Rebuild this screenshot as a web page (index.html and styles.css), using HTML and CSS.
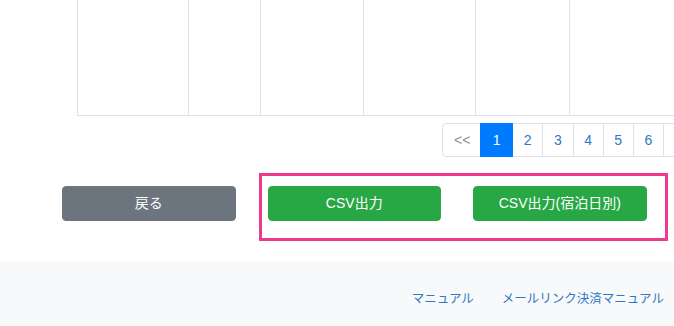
FILE: index.html
```html
<!DOCTYPE html>
<html lang="ja">
<head>
    <meta charset="UTF-8">
    <meta name="viewport" content="width=device-width, initial-scale=1.0">
    <title>予約一覧</title>
    <link rel="stylesheet" href="styles.css">
</head>
<body>
    <div class="main">
        <div class="table-wrap">
            <table class="data-table">
                <colgroup>
                    <col style="width: 111px">
                    <col style="width: 72px">
                    <col style="width: 103px">
                    <col style="width: 112px">
                    <col style="width: 94px">
                    <col style="width: 105px">
                </colgroup>
                <tbody>
                    <tr>
                        <td></td><td></td><td></td><td></td><td></td><td></td>
                    </tr>
                </tbody>
            </table>
        </div>

        <ul class="pagination">
            <li class="page-item disabled"><a class="page-link" href="#">&lt;&lt;</a></li>
            <li class="page-item active"><a class="page-link" href="#">1</a></li>
            <li class="page-item"><a class="page-link" href="#">2</a></li>
            <li class="page-item"><a class="page-link" href="#">3</a></li>
            <li class="page-item"><a class="page-link" href="#">4</a></li>
            <li class="page-item"><a class="page-link" href="#">5</a></li>
            <li class="page-item"><a class="page-link" href="#">6</a></li>
            <li class="page-item page-edge"><span class="page-link"></span></li>
        </ul>

        <div class="actions">
            <div class="col"><button class="btn btn-secondary">戻る</button></div>
            <div class="col"><button class="btn btn-success">CSV出力</button></div>
            <div class="col"><button class="btn btn-success">CSV出力(宿泊日別)</button></div>
            <div class="highlight"></div>
        </div>
    </div>

    <footer class="footer">
        <a href="#">マニュアル</a>
        <a href="#">メールリンク決済マニュアル</a>
    </footer>
</body>
</html>
```

FILE: styles.css
```css
:root {
    --border-color: #dee2e6;
    --link-color: #2f78c4;
    --primary-color: #007bff;
    --success-color: #28a745;
    --secondary-color: #6c757d;
    --footer-bg: #f8f9fa;
    --mark-color: #ec3a8f;
}
* {
    box-sizing: border-box;
}
body {
    margin: 0;
    width: 674px;
    height: 326px;
    overflow: hidden;
    font-family: 'Liberation Sans', 'Noto Sans CJK JP', sans-serif;
    font-size: 14px;
    color: #212529;
    background: #fff;
}
.main {
    padding-bottom: 41px;
}
.table-wrap {
    padding-left: 77px;
    overflow: hidden;
}
.data-table {
    table-layout: fixed;
    width: 597px;
    border-collapse: collapse;
}
.data-table td {
    height: 115px;
    border: 1px solid var(--border-color);
    border-top: 0;
}
.data-table td:last-child {
    border-right: 0;
}
.pagination {
    display: flex;
    list-style: none;
    margin: 7px 0 0 442px;
    padding: 0;
    overflow: hidden;
}
.page-link {
    display: block;
    height: 34px;
    padding: 8px 10.7px;
    margin-left: -1px;
    line-height: 16px;
    font-size: 14px;
    color: var(--link-color);
    text-decoration: none;
    background: #fff;
    border: 1px solid var(--border-color);
}
.page-item:first-child .page-link {
    margin-left: 0;
    border-radius: 4px 0 0 4px;
    padding: 8px 10px 8px 11px;
}
.page-item.disabled .page-link {
    color: #8a9096;
}
.page-item.active .page-link {
    position: relative;
    z-index: 1;
    padding: 8px 11.5px;
    color: #fff;
    background: var(--primary-color);
    border-color: var(--primary-color);
}
.page-edge .page-link {
    width: 20px;
}
.actions {
    position: relative;
    display: grid;
    grid-template-columns: repeat(3, 205.5px);
    padding-left: 46px;
    margin-top: 29px;
}
.col {
    padding: 0 16px;
}
.btn {
    display: block;
    width: 100%;
    padding: 6px 12px;
    font-family: inherit;
    font-size: 14px;
    line-height: 21px;
    color: #fff;
    border: 1px solid transparent;
    border-radius: 4px;
    cursor: pointer;
}
.btn-secondary {
    background: var(--secondary-color);
    border-color: var(--secondary-color);
}
.btn-success {
    background: var(--success-color);
    border-color: var(--success-color);
}
.highlight {
    position: absolute;
    left: 259px;
    top: -13px;
    width: 409px;
    height: 68px;
    border: 3px solid var(--mark-color);
    pointer-events: none;
}
.footer {
    display: flex;
    justify-content: flex-end;
    gap: 28px;
    height: 64px;
    padding: 29px 10px 0 0;
    background: var(--footer-bg);
    font-size: 12.5px;
}
.footer a {
    color: var(--link-color);
    text-decoration: none;
    line-height: 16px;
}
```
